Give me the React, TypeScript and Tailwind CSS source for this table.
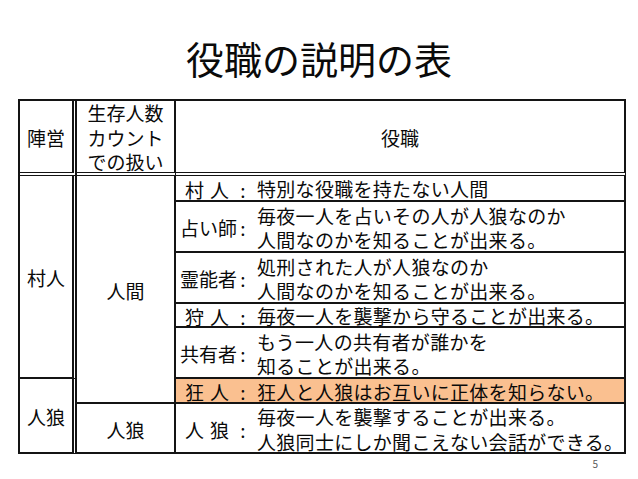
import React from "react";

const B = "border-[#141414]";

function Role({
  name,
  spaced,
  lines,
  bg,
  rowStart,
}: {
  name: string[];
  spaced?: boolean;
  lines: string[];
  bg?: string;
  rowStart: string;
}) {
  return (
    <div
      className={`col-start-3 ${rowStart} border-r-2 border-b-2 ${B} ${bg ?? ""} flex items-center pt-[3px]`}
    >
      <div className={`w-[62px] flex ${spaced ? "pl-[9px] gap-[6px]" : "pl-[4px]"}`}>
        {name.map((c, i) => (
          <span key={i}>{c}</span>
        ))}
      </div>
      <div className="w-[10px] text-center">:</div>
      <div className="ml-[9px] leading-[24.5px] whitespace-nowrap tracking-[0.3px]">
        {lines.map((l, i) => (
          <div key={i}>{l}</div>
        ))}
      </div>
    </div>
  );
}

export default function App() {
  return (
    <div className="w-[638px] h-[479px] bg-white text-[#0a0a0a] font-['Noto_Sans_CJK_JP',sans-serif] overflow-hidden">
      <div className="h-[99px] pt-[34px] text-center text-[38px] leading-[48px]">役職の説明の表</div>
      <div
        className={`ml-[18px] w-[608px] grid grid-cols-[57px_99px_450px] grid-rows-[75px_26px_51px_51px_24px_51px_25px_50px] border-l-2 border-t-2 ${B} text-[19px] leading-[24px]`}
      >
        {/* header */}
        <div className={`col-start-1 row-start-1 border-r-[5px] border-double border-b-[4px] ${B} flex items-center justify-center pt-[3px]`}>
          陣営
        </div>
        <div className={`col-start-2 row-start-1 border-r-2 border-b-[4px] border-double ${B} flex flex-col items-center justify-center leading-[24.5px] pt-[3px]`}>
          <div>生存人数</div>
          <div>カウント</div>
          <div>での扱い</div>
        </div>
        <div className={`col-start-3 row-start-1 border-r-2 border-b-[4px] border-double ${B} flex items-center justify-center pt-[3px]`}>
          役職
        </div>

        {/* faction col */}
        <div className={`col-start-1 row-start-2 row-span-5 border-r-[5px] border-double border-b-2 ${B} flex items-center justify-center pt-[3px]`}>
          村人
        </div>
        <div className={`col-start-1 row-start-7 row-span-2 border-r-[5px] border-double border-b-2 ${B} flex items-center justify-center pt-[3px]`}>
          人狼
        </div>

        {/* count col */}
        <div className={`col-start-2 row-start-2 row-span-6 border-r-2 border-b-2 ${B} flex items-center justify-center pt-[3px]`}>
          人間
        </div>
        <div className={`col-start-2 row-start-8 border-r-2 border-b-2 ${B} flex items-center justify-center pt-[3px]`}>
          人狼
        </div>

        {/* roles */}
        <Role rowStart="row-start-2" name={["村", "人"]} spaced lines={["特別な役職を持たない人間"]} />
        <Role
          rowStart="row-start-3"
          name={["占い師"]}
          lines={["毎夜一人を占いその人が人狼なのか", "人間なのかを知ることが出来る。"]}
        />
        <Role
          rowStart="row-start-4"
          name={["霊能者"]}
          lines={["処刑された人が人狼なのか", "人間なのかを知ることが出来る。"]}
        />
        <Role rowStart="row-start-5" name={["狩", "人"]} spaced lines={["毎夜一人を襲撃から守ることが出来る。"]} />
        <Role
          rowStart="row-start-6"
          name={["共有者"]}
          lines={["もう一人の共有者が誰かを", "知ることが出来る。"]}
        />
        <Role
          rowStart="row-start-7"
          name={["狂", "人"]}
          spaced
          bg="bg-[#FAC090]"
          lines={["狂人と人狼はお互いに正体を知らない。"]}
        />
        <Role
          rowStart="row-start-8"
          name={["人", "狼"]}
          spaced
          lines={["毎夜一人を襲撃することが出来る。", "人狼同士にしか聞こえない会話ができる。"]}
        />
      </div>
      <div className="mt-[4px] pr-[40px] text-right text-[10px] leading-[12px] text-[#595959]">5</div>
    </div>
  );
}
